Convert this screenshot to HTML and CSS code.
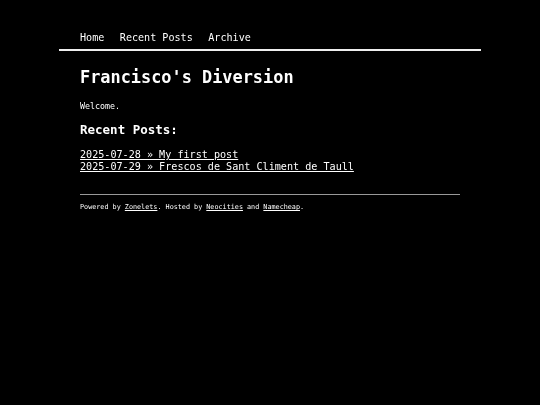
FILE: index.html
```html
<!DOCTYPE html>
<html>
<head>
<meta charset="utf-8">
<title>Francisco's Diversion</title>
<link rel="stylesheet" href="styles.css">
</head>
<body>
<div class="wrap">
  <nav class="nav">
    <a href="#">Home</a>
    <a href="#">Recent Posts</a>
    <a href="#">Archive</a>
  </nav>
  <main class="main">
    <h1 class="title">Francisco's Diversion</h1>
    <p class="welcome">Welcome.</p>
    <h2 class="subtitle">Recent Posts:</h2>
    <ul class="posts">
      <li><a href="#">2025-07-28 » My first post</a></li>
      <li><a href="#">2025-07-29 » Frescos de Sant Climent de Taull</a></li>
    </ul>
    <footer class="footer">
      <hr class="rule">
      <p class="credits">Powered by <a href="#">Zonelets</a>. Hosted by <a href="#">Neocities</a> and <a href="#">Namecheap</a>.</p>
    </footer>
  </main>
</div>
</body>
</html>
```

FILE: styles.css
```css
html, body {
  margin: 0;
  padding: 0;
  background: #000;
  color: #fff;
  font-family: "DejaVu Sans Mono", monospace;
}

a {
  color: #fff;
}

.wrap {
  width: 422px;
  margin: 0 auto;
  will-change: transform;
}

.nav {
  display: flex;
  gap: 15.5px;
  padding: 32px 21px 5px;
  font-size: 10.1px;
  line-height: 12px;
  border-bottom: 2px solid #eee;
}

.nav a {
  text-decoration: none;
}

.main {
  padding: 0 21px;
}

.title {
  margin: 15.8px 0 0;
  font-size: 16.9px;
  line-height: 20px;
  font-weight: bold;
}

.welcome {
  margin: 14.1px 0 0;
  font-size: 8.3px;
  line-height: 10px;
}

.subtitle {
  margin: 11.1px 0 0;
  font-size: 12.5px;
  line-height: 15px;
  font-weight: bold;
}

.posts {
  list-style: none;
  margin: 12.5px 0 0;
  padding: 0;
  font-size: 10.12px;
  line-height: 12px;
}

.footer {
  margin-top: 21px;
}

.rule {
  margin: 0;
  width: 380px;
  height: 0;
  border: 0;
  border-top: 1px solid #999;
}

.credits {
  margin: 8px 0 0;
  font-size: 6.77px;
  line-height: 8px;
}
```
